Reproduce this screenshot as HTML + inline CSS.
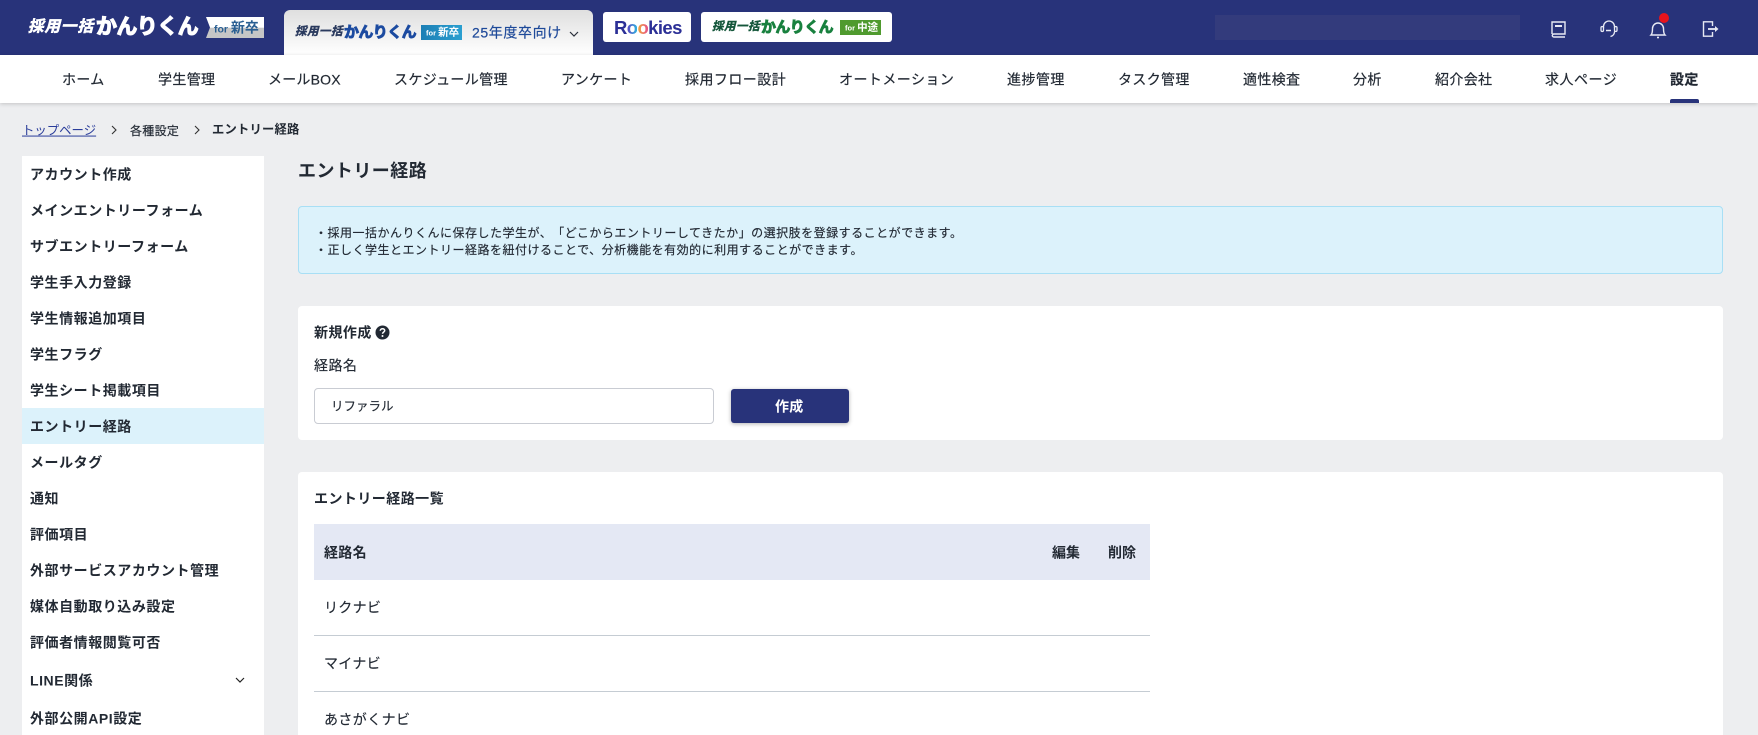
<!DOCTYPE html>
<html lang="ja"><head><meta charset="utf-8"><title>エントリー経路</title>
<style>
*{box-sizing:border-box}
html,body{margin:0;padding:0;width:1758px;height:735px;overflow:hidden;background:#edeef0}
body{font-family:"Liberation Sans","Noto Sans CJK JP",sans-serif;color:#222933;position:relative;text-spacing-trim:space-all}
.a{position:absolute;white-space:nowrap}
.t{position:absolute;white-space:nowrap;transform:translateY(-50%);line-height:1.2}
#hd{position:absolute;left:0;top:0;width:1758px;height:55px;background:#28337a}
#nav{position:absolute;left:0;top:55px;width:1758px;height:48px;background:#fff;box-shadow:0 1px 4px rgba(0,0,0,.18)}
.n{font-size:14px;letter-spacing:.35px;top:80px;color:#222933;-webkit-text-stroke:.2px #222933}
.si{left:30px;font-size:14px;font-weight:700;letter-spacing:.55px}
.card{position:absolute;left:298px;width:1425px;background:#fff;border-radius:4px}
.lg1{font-style:italic;font-weight:700;letter-spacing:-.5px}
.lg2{font-weight:700;letter-spacing:-.6px}
.m{-webkit-text-stroke:.15px #222933}
</style></head><body>
<div id="hd"></div>
<!-- main logo -->
<div class="t lg1" style="left:28px;top:28px;font-size:15.5px;color:#fff;-webkit-text-stroke:.6px #fff;letter-spacing:1px">採用一括</div>
<div class="t lg2" style="left:96px;top:27px;font-size:21px;color:#fff;-webkit-text-stroke:1.2px #fff">かんりくん</div>
<div class="a" style="left:206px;top:17px;width:58px;height:21px;background:linear-gradient(#fff 0,#fff 50%,#c6c6c6 52%,#c6c6c6 100%);clip-path:polygon(0 0,100% 0,100% 100%,0 100%,4px 50%)"></div>
<div class="t" style="left:214px;top:28px;font-size:14px;font-weight:700;color:#2a5f92"><span style="font-size:10.500px">for </span>新卒</div>
<!-- tab -->
<div class="a" style="left:284px;top:10px;width:309px;height:45px;border-radius:6px 6px 0 0;background:linear-gradient(#dfdfdf,#fff)"></div>
<div class="t lg1" style="left:295px;top:33px;font-size:11.500px;color:#2a3a5e;letter-spacing:.5px;-webkit-text-stroke:.4px #2a3a5e">採用一括</div>
<div class="t lg2" style="left:344px;top:33px;font-size:15px;color:#1c4ba0;-webkit-text-stroke:.9px #1c4ba0">かんりくん</div>
<div class="a" style="left:421px;top:25px;width:41px;height:15px;background:linear-gradient(90deg,#1c7fb5,#2a9fd0)"></div>
<div class="t" style="left:426px;top:33px;font-size:10.500px;font-weight:700;color:#fff"><span style="font-size:7.500px">for </span>新卒</div>
<div class="t" style="left:472px;top:33px;font-size:14px;letter-spacing:.6px;color:#1f4a9a;-webkit-text-stroke:.2px #1f4a9a">25年度卒向け</div>
<svg class="a" style="left:569px;top:30px" width="10" height="8" viewBox="0 0 10 8"><path d="M1 2 5 6 9 2" fill="none" stroke="#2a2f3a" stroke-width="1.200"/></svg>
<!-- Rookies -->
<div class="a" style="left:603px;top:12px;width:88px;height:30px;background:#fff;border-radius:3px"></div>
<div class="t" style="left:614px;top:28px;font-size:18.500px;font-weight:700;color:#2b2f96;letter-spacing:-.6px">R<span style="background:linear-gradient(90deg,#5a3fc0,#2fb4e0);-webkit-background-clip:text;background-clip:text;color:transparent">o</span><span style="background:linear-gradient(90deg,#f0b030,#e8508a);-webkit-background-clip:text;background-clip:text;color:transparent">o</span>kies</div>
<!-- chuto -->
<div class="a" style="left:701px;top:12px;width:191px;height:30px;background:#fff;border-radius:3px"></div>
<div class="t lg1" style="left:712px;top:28px;font-size:11.500px;color:#14563a;letter-spacing:.5px;-webkit-text-stroke:.4px #14563a">採用一括</div>
<div class="t lg2" style="left:761px;top:28px;font-size:15px;color:#19813f;-webkit-text-stroke:.9px #19813f">かんりくん</div>
<div class="a" style="left:840px;top:20px;width:41px;height:15px;background:#4f9a2e"></div>
<div class="t" style="left:845px;top:28px;font-size:10.500px;font-weight:700;color:#fff"><span style="font-size:7.500px">for </span>中途</div>
<!-- search -->
<div class="a" style="left:1215px;top:15px;width:305px;height:25px;background:#333b7c"></div>
<!-- icons -->
<svg class="a" style="left:1550px;top:20px" width="17" height="18" viewBox="0 0 17 18" fill="none" stroke="#e8eaf4" stroke-width="1.400"><path d="M2 14V2h13v12H3.800a1.500 1.500 0 0 0 0 3H15"/><path d="M5 5h7v2H5z" fill="#e8eaf4" stroke="none"/></svg>
<svg class="a" style="left:1600px;top:19px" width="18" height="20" viewBox="0 0 18 20" fill="none" stroke="#e8eaf4" stroke-width="1.300"><path d="M3.500 9V7.500a5.500 5.500 0 0 1 11 0V9"/><rect x="1" y="7.500" width="2.500" height="5" rx="1.200"/><rect x="14.500" y="7.500" width="2.500" height="5" rx="1.200"/><path d="M14.500 12.500c0 3-2 4.500-4 5"/><path d="M6 11.500h5" stroke-width="1.500"/></svg>
<svg class="a" style="left:1649px;top:20px" width="18" height="20" viewBox="0 0 18 20" fill="none" stroke="#e8eaf4" stroke-width="1.400"><path d="M2 15c1-1 1.500-3.500 1.500-6.500a5.500 5.500 0 0 1 11 0c0 3 .5 5.500 1.500 6.500z"/><path d="M8 17.500h2" stroke-width="1.600"/></svg>
<div class="a" style="left:1659px;top:13px;width:10px;height:10px;border-radius:50%;background:#e8141c"></div>
<svg class="a" style="left:1702px;top:20px" width="18" height="18" viewBox="0 0 18 18" fill="none" stroke="#e8eaf4" stroke-width="1.400"><path d="M10.500 6V1.800h-9v14.400h9V12"/><path d="M6 9h8" stroke-width="1.800"/><path d="M13 6 16.500 9 13 12z" fill="#e8eaf4" stroke="none"/></svg>
<!-- nav -->
<div id="nav"></div>
<div class="t n" style="left:62px">ホーム</div>
<div class="t n" style="left:158px">学生管理</div>
<div class="t n" style="left:268px;letter-spacing:.2px">メールBOX</div>
<div class="t n" style="left:394px">スケジュール管理</div>
<div class="t n" style="left:561px">アンケート</div>
<div class="t n" style="left:685px;letter-spacing:.45px">採用フロー設計</div>
<div class="t n" style="left:839px;letter-spacing:.45px">オートメーション</div>
<div class="t n" style="left:1007px;letter-spacing:.45px">進捗管理</div>
<div class="t n" style="left:1118px">タスク管理</div>
<div class="t n" style="left:1243px">適性検査</div>
<div class="t n" style="left:1353px">分析</div>
<div class="t n" style="left:1435px">紹介会社</div>
<div class="t n" style="left:1545px;letter-spacing:.5px">求人ページ</div>
<div class="t n" style="left:1670px;font-weight:700">設定</div>
<div class="a" style="left:1670px;top:99px;width:29px;height:4px;background:#28337a;border-radius:2px 2px 0 0"></div>
<!-- breadcrumb -->
<div class="t" style="left:22px;top:131px;font-size:12.400px;color:#2a3d9a;text-decoration:underline">トップページ</div>
<svg class="a" style="left:110px;top:125px" width="8" height="10" viewBox="0 0 8 10"><path d="M2 1l4 4-4 4" fill="none" stroke="#333" stroke-width="1.100"/></svg>
<div class="t m" style="left:130px;top:131px;font-size:12px;letter-spacing:.3px">各種設定</div>
<svg class="a" style="left:193px;top:125px" width="8" height="10" viewBox="0 0 8 10"><path d="M2 1l4 4-4 4" fill="none" stroke="#333" stroke-width="1.100"/></svg>
<div class="t" style="left:212px;top:130px;font-size:12.300px;font-weight:700;letter-spacing:.2px">エントリー経路</div>
<!-- sidebar -->
<div class="a" style="left:22px;top:156px;width:242px;height:579px;background:#fff"></div>
<div class="a" style="left:22px;top:408px;width:242px;height:36px;background:#dcf2fb"></div>
<div class="t si" style="top:175px">アカウント作成</div>
<div class="t si" style="top:211px">メインエントリーフォーム</div>
<div class="t si" style="top:247px">サブエントリーフォーム</div>
<div class="t si" style="top:283px">学生手入力登録</div>
<div class="t si" style="top:319px">学生情報追加項目</div>
<div class="t si" style="top:355px">学生フラグ</div>
<div class="t si" style="top:391px">学生シート掲載項目</div>
<div class="t si" style="top:427px">エントリー経路</div>
<div class="t si" style="top:463px">メールタグ</div>
<div class="t si" style="top:499px">通知</div>
<div class="t si" style="top:535px">評価項目</div>
<div class="t si" style="top:571px">外部サービスアカウント管理</div>
<div class="t si" style="top:607px">媒体自動取り込み設定</div>
<div class="t si" style="top:643px">評価者情報閲覧可否</div>
<div class="t si" style="top:681px">LINE関係</div>
<svg class="a" style="left:234px;top:676px" width="12" height="8" viewBox="0 0 12 8"><path d="M2 2l4 4 4-4" fill="none" stroke="#222" stroke-width="1.200"/></svg>
<div class="t si" style="top:719px">外部公開API設定</div>
<!-- main -->
<div class="t" style="left:298px;top:171.500px;font-size:18px;font-weight:700;letter-spacing:.45px">エントリー経路</div>
<div class="a" style="left:298px;top:206px;width:1425px;height:68px;background:#dcf2fb;border:1px solid #a8dff5;border-radius:4px"></div>
<div class="t m" style="left:315px;top:233px;font-size:12px;letter-spacing:.5px">・採用一括かんりくんに保存した学生が、「どこからエントリーしてきたか」の選択肢を登録することができます。</div>
<div class="t m" style="left:315px;top:250px;font-size:12px;letter-spacing:.5px">・正しく学生とエントリー経路を紐付けることで、分析機能を有効的に利用することができます。</div>
<div class="card" style="top:306px;height:134px"></div>
<div class="t" style="left:314px;top:333px;font-size:14px;font-weight:700;letter-spacing:.45px">新規作成</div>
<svg class="a" style="left:375px;top:325px" width="15" height="15" viewBox="0 0 15 15"><circle cx="7.500" cy="7.500" r="7" fill="#222933"/><path d="M5.300 5.800c0-1.300 1-2.100 2.200-2.100s2.200.8 2.200 1.900c0 1.500-2.200 1.600-2.200 3.200" fill="none" stroke="#fff" stroke-width="1.500"/><circle cx="7.500" cy="11" r="1" fill="#fff"/></svg>
<div class="t m" style="left:314px;top:366px;font-size:14px;letter-spacing:.45px">経路名</div>
<div class="a" style="left:314px;top:388px;width:400px;height:36px;background:#fff;border:1px solid #c9ccd3;border-radius:4px"></div>
<div class="t m" style="left:331px;top:407px;font-size:12.500px;letter-spacing:0">リファラル</div>
<div class="a" style="left:731px;top:389px;width:118px;height:34px;background:#28337a;border-radius:3px;box-shadow:0 1px 4px rgba(0,0,0,.3)"></div>
<div class="t" style="left:775px;top:407px;font-size:14px;font-weight:700;color:#fff;letter-spacing:.3px">作成</div>
<div class="card" style="top:472px;height:270px"></div>
<div class="t" style="left:314px;top:499px;font-size:14px;font-weight:700;letter-spacing:.45px">エントリー経路一覧</div>
<div class="a" style="left:314px;top:524px;width:836px;height:56px;background:#e4e8f4"></div>
<div class="t" style="left:324px;top:553px;font-size:14px;font-weight:700;letter-spacing:.3px">経路名</div>
<div class="t" style="left:1052px;top:553px;font-size:14px;font-weight:700">編集</div>
<div class="t" style="left:1108px;top:553px;font-size:14px;font-weight:700">削除</div>
<div class="t m" style="left:324px;top:608px;font-size:14px;letter-spacing:.3px">リクナビ</div>
<div class="a" style="left:314px;top:635px;width:836px;height:1px;background:#c5ccd3"></div>
<div class="t m" style="left:324px;top:664px;font-size:14px;letter-spacing:.3px">マイナビ</div>
<div class="a" style="left:314px;top:691px;width:836px;height:1px;background:#c5ccd3"></div>
<div class="t m" style="left:324px;top:720px;font-size:14px;letter-spacing:.4px">あさがくナビ</div>
</body></html>
